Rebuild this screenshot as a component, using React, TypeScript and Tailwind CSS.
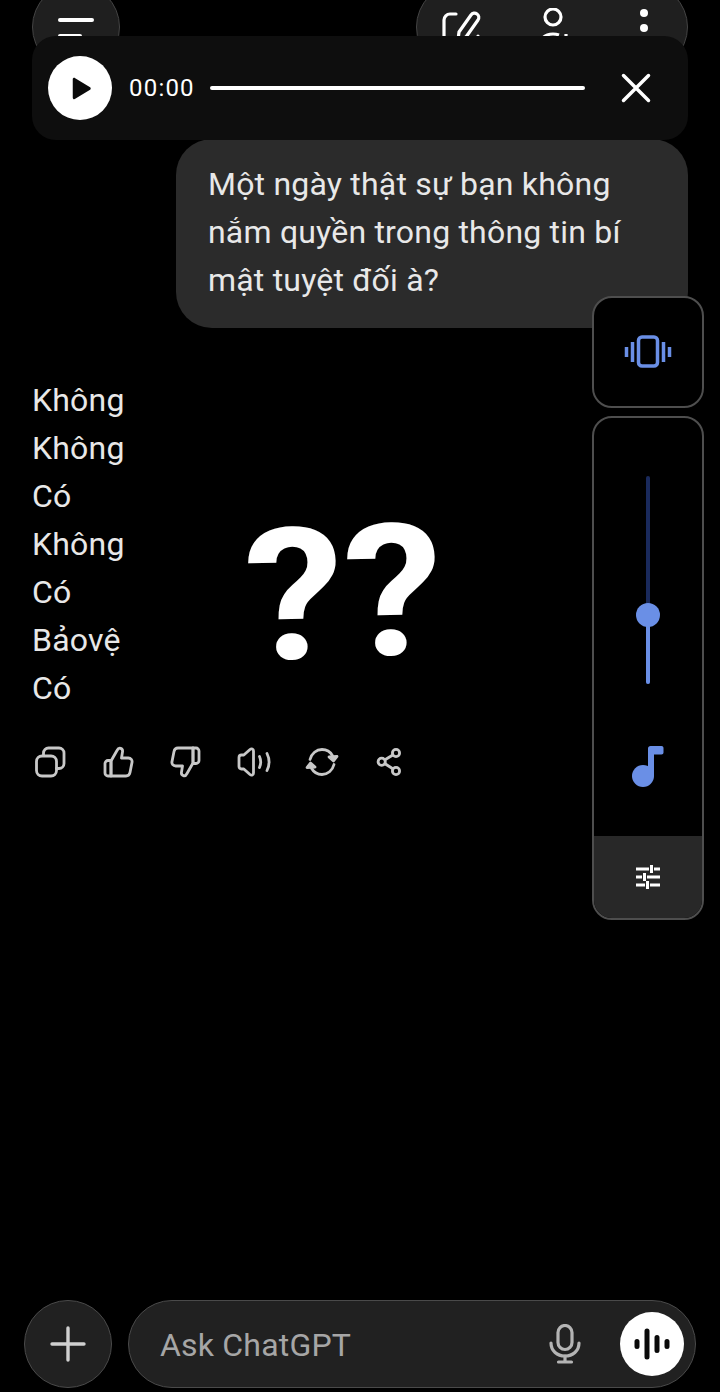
import type { ReactNode } from "react";

const answers = ["Không", "Không", "Có", "Không", "Có", "Bảovệ", "Có"];

function ActionIcon({ children }: { children: ReactNode }) {
  return (
    <svg width="36" height="36" viewBox="0 0 36 36" fill="none" stroke="#c8c8c8" strokeWidth="2.8" strokeLinecap="round" strokeLinejoin="round">
      {children}
    </svg>
  );
}

const thumb = (
  <>
    <path d="M11 16.500H8a3 3 0 0 0-3 3V29a3 3 0 0 0 3 3h3z" />
    <path d="M11 17l6-10.500c.8-1.600 2.400-2.600 3.600-2.200 1.600.5 2.200 2 1.900 3.700L21.500 14h6.800c2.600 0 4.200 2 3.700 4.400l-2 10.200c-.4 2-2 3.400-4 3.400H11z" />
  </>
);

function ActionRow() {
  return (
    <div className="flex mt-[32px] ml-[32px] h-[36px] gap-[32px]">
      <ActionIcon>
        <rect x="4.500" y="12" width="20" height="20" rx="5.500" />
        <path d="M11.500 11V9a5 5 0 0 1 5-5H27a5 5 0 0 1 5 5v10.500a5 5 0 0 1-5 5h-2.500" />
      </ActionIcon>
      <ActionIcon>{thumb}</ActionIcon>
      <ActionIcon>
        <g transform="rotate(180 18 18)">{thumb}</g>
      </ActionIcon>
      <ActionIcon>
        <path d="M3 13.500c0-1.500 1-2.500 2.500-2.500h2.300L14 5.500c1.600-1.300 3.500-.5 3.500 1.500v22c0 2-1.900 2.800-3.500 1.500L7.800 25H5.500C4 25 3 24 3 22.500z" />
        <path d="M23.500 12.500c1.500 3.400 1.500 7.600 0 11" />
        <path d="M31 9.500c2.700 5.500 2.700 11.500 0 17" />
      </ActionIcon>
      <ActionIcon>
        <path d="M6 15.500C7.500 9.500 12.400 5.500 18 5.500c4.500 0 8.400 2.400 10.500 6.200" />
        <path d="M30 20.500c-1.500 6-6.400 10-12 10-4.500 0-8.400-2.400-10.500-6.200" />
        <path d="M33 12.500l-3.500 4.500-4.500-4z" fill="#c8c8c8" />
        <path d="M3 23.500l3.500-4.500 4.500 4z" fill="#c8c8c8" />
      </ActionIcon>
      <div className="-ml-[1px]">
        <ActionIcon>
          <circle cx="10.700" cy="17.700" r="3.600" />
          <circle cx="25" cy="9" r="3.600" />
          <circle cx="25" cy="27" r="3.600" />
          <path d="M14 15.800l7.800-4.800M14 19.800l7.800 5" />
        </ActionIcon>
      </div>
    </div>
  );
}

function AudioBar() {
  return (
    <div className="absolute left-[32px] top-[36px] w-[656px] h-[104px] rounded-[24px] bg-[#0e0e0e] flex items-center pl-[16px]">
      <div className="w-[64px] h-[64px] rounded-full bg-white flex items-center justify-center">
        <svg className="ml-[3px]" width="21" height="25" viewBox="0 0 24 28">
          <path d="M2 3.500v21c0 1.500 1.500 2.200 2.800 1.300l17-10.300c1-.7 1-2.300 0-3L4.800 2.200C3.500 1.300 2 2 2 3.500z" fill="#0a0a0a" />
        </svg>
      </div>
      <span className="ml-[17px] text-[24px] leading-[32px] text-white tracking-[1.2px] w-[66px]">00:00</span>
      <div className="ml-[15px] w-[375px] h-[4px] rounded-full bg-white" />
      <svg className="ml-[35px]" width="32" height="32" viewBox="0 0 32 32" fill="none" stroke="#ffffff" strokeWidth="3.500" strokeLinecap="round">
        <path d="M3.500 3.500l25 25M28.500 3.500l-25 25" />
      </svg>
    </div>
  );
}

function VolumePanel() {
  return (
    <div className="absolute left-[592px] top-[296px] w-[112px] flex flex-col gap-[8px]">
      <div className="h-[112px] rounded-[20px] border-2 border-[#4e4e4e] bg-black flex items-center justify-center">
        <svg width="48" height="36" viewBox="0 0 48 36" fill="none" stroke="#6a8fe6" strokeWidth="3.500">
          <rect x="14.500" y="3" width="19" height="29" rx="3.500" />
          <path d="M8.500 8v20M39.500 8v20" />
          <path d="M2.500 13v10M45.500 13v10" />
        </svg>
      </div>
      <div className="h-[504px] rounded-[20px] border-2 border-[#4e4e4e] bg-black overflow-hidden flex flex-col">
        <div className="flex-1 flex flex-col items-center">
          <div className="relative mt-[58px] w-[4px] h-[208px] rounded-full bg-[#1a2a5c]">
            <div className="absolute bottom-0 left-0 w-[4px] h-[69px] rounded-full bg-[#6a8fe6]" />
            <div className="absolute left-[-10px] top-[127px] w-[24px] h-[24px] rounded-full bg-[#6a8fe6]" />
          </div>
          <svg className="mt-[60px]" width="36" height="44" viewBox="0 0 36 44">
            <circle cx="13" cy="32" r="11" fill="#6a8fe6" />
            <path d="M18 32V4.500C18 3 19 2 20.500 2H31.500c1.200 0 2 .8 2 2v4.500c0 1.200-.8 2-2 2H24V32z" fill="#6a8fe6" />
          </svg>
        </div>
        <div className="h-[82px] bg-[#282828] flex items-center justify-center">
          <svg width="26" height="26" viewBox="0 0 26 26" fill="none" stroke="#ffffff" strokeWidth="3">
            <path d="M1 5h13M19 5h6M16.500 1v8" />
            <path d="M1 13h6M12 13h13M9.500 9v8" />
            <path d="M1 21h9M15 21h10M12.500 17v8" />
          </svg>
        </div>
      </div>
    </div>
  );
}

function Composer() {
  return (
    <div className="mt-auto mb-[4px] mx-[24px] flex gap-[16px]">
      <div className="w-[88px] h-[88px] rounded-full bg-[#212121] border border-[#4a4a4a] flex items-center justify-center">
        <svg width="36" height="36" viewBox="0 0 36 36" stroke="#d0d0d0" strokeWidth="3.400" strokeLinecap="round">
          <path d="M18 2v32M2 18h32" />
        </svg>
      </div>
      <div className="flex-1 h-[88px] rounded-full bg-[#212121] border border-[#4a4a4a] flex items-center pl-[31px] pr-[11px]">
        <span className="text-[32px] leading-[40px] text-[#a6a6a6] tracking-[0.2px] flex-1 pt-[2px]">Ask ChatGPT</span>
        <svg className="mr-[39px]" width="32" height="40" viewBox="0 0 32 40" fill="none" stroke="#b4b4b4" strokeWidth="3.200" strokeLinecap="round">
          <rect x="9" y="1.500" width="14" height="24" rx="7" />
          <path d="M2 19c0 8 6.200 13 14 13s14-5 14-13" />
          <path d="M16 32v6M9.500 38h13" />
        </svg>
        <div className="w-[64px] h-[64px] rounded-full bg-white flex items-center justify-center">
          <svg width="36" height="36" viewBox="0 0 36 36" stroke="#0a0a0a" strokeWidth="5" strokeLinecap="round">
            <path d="M3 15.500v5M13 5v26M23 11.500v13M33 15.500v5" />
          </svg>
        </div>
      </div>
    </div>
  );
}

export default function App() {
  return (
    <div className="relative w-[720px] h-[1392px] bg-black overflow-hidden flex flex-col font-['Roboto',sans-serif]">
      {/* header, mostly hidden behind the audio bar */}
      <div className="-mt-[17px] h-[88px] mx-[32px] flex justify-between shrink-0">
        <div className="w-[88px] h-[88px] rounded-full bg-[#1f1f1f] border border-[#444444] flex flex-col pt-[34px] pl-[25px] gap-[12px]">
          <div className="w-[36px] h-[4px] rounded-full bg-white" />
          <div className="w-[24px] h-[4px] rounded-full bg-white" />
        </div>
        <div className="w-[272px] h-[88px] rounded-full bg-[#1f1f1f] border border-[#444444] flex items-start pt-[26px] pl-[25px]">
          <svg width="40" height="44" viewBox="0 0 40 44" fill="none" stroke="#ffffff" strokeWidth="3.200" strokeLinecap="round" strokeLinejoin="round">
            <path d="M14 4H8a6 6 0 0 0-6 6v22a6 6 0 0 0 6 6h22a6 6 0 0 0 6-6V26" />
            <path d="M16 30l1-8L29 5c1.500-2 4-2.500 6-1s2.300 4 1 6L24 27z" />
          </svg>
          <svg className="ml-[55px] -mt-[2px]" width="36" height="44" viewBox="0 0 36 44" fill="none" stroke="#ffffff" strokeWidth="3.200">
            <circle cx="16" cy="9" r="8" />
            <path d="M2 40c0-9 6-14 14-14 2 0 4 .3 6 1M29 26v8" />
          </svg>
          <div className="ml-[67px] -mt-[1px] flex flex-col gap-[7px]">
            <div className="w-[8px] h-[8px] rounded-full bg-white" />
            <div className="w-[8px] h-[8px] rounded-full bg-white" />
            <div className="w-[8px] h-[8px] rounded-full bg-white" />
          </div>
        </div>
      </div>

      {/* user bubble */}
      <div className="self-end mr-[32px] mt-[68px] w-[512px] h-[189px] rounded-[36px] bg-[#2b2b2b] px-[32px] pt-[21px] text-[32px] leading-[48px] tracking-[0.2px] text-[#e8e8e8]">
        Một ngày thật sự bạn không nắm quyền trong thông tin bí mật tuyệt đối à?
      </div>

      {/* answer */}
      <div className="mt-[48px] ml-[32px] text-[32px] leading-[48px] tracking-[0.2px] text-[#e8e8e8]">
        {answers.map((line, i) => (
          <div key={i}>{line}</div>
        ))}
      </div>
      <ActionRow />

      <Composer />

      {/* big question marks sticker */}
      <span className="absolute left-[248px] top-[486px] text-[184px] leading-[220px] font-bold text-white -rotate-1 scale-x-[1.08]">?</span>
      <span className="absolute left-[347px] top-[482px] text-[184px] leading-[220px] font-bold text-white -rotate-1 scale-x-[1.08]">?</span>

      <AudioBar />
      <VolumePanel />
    </div>
  );
}
